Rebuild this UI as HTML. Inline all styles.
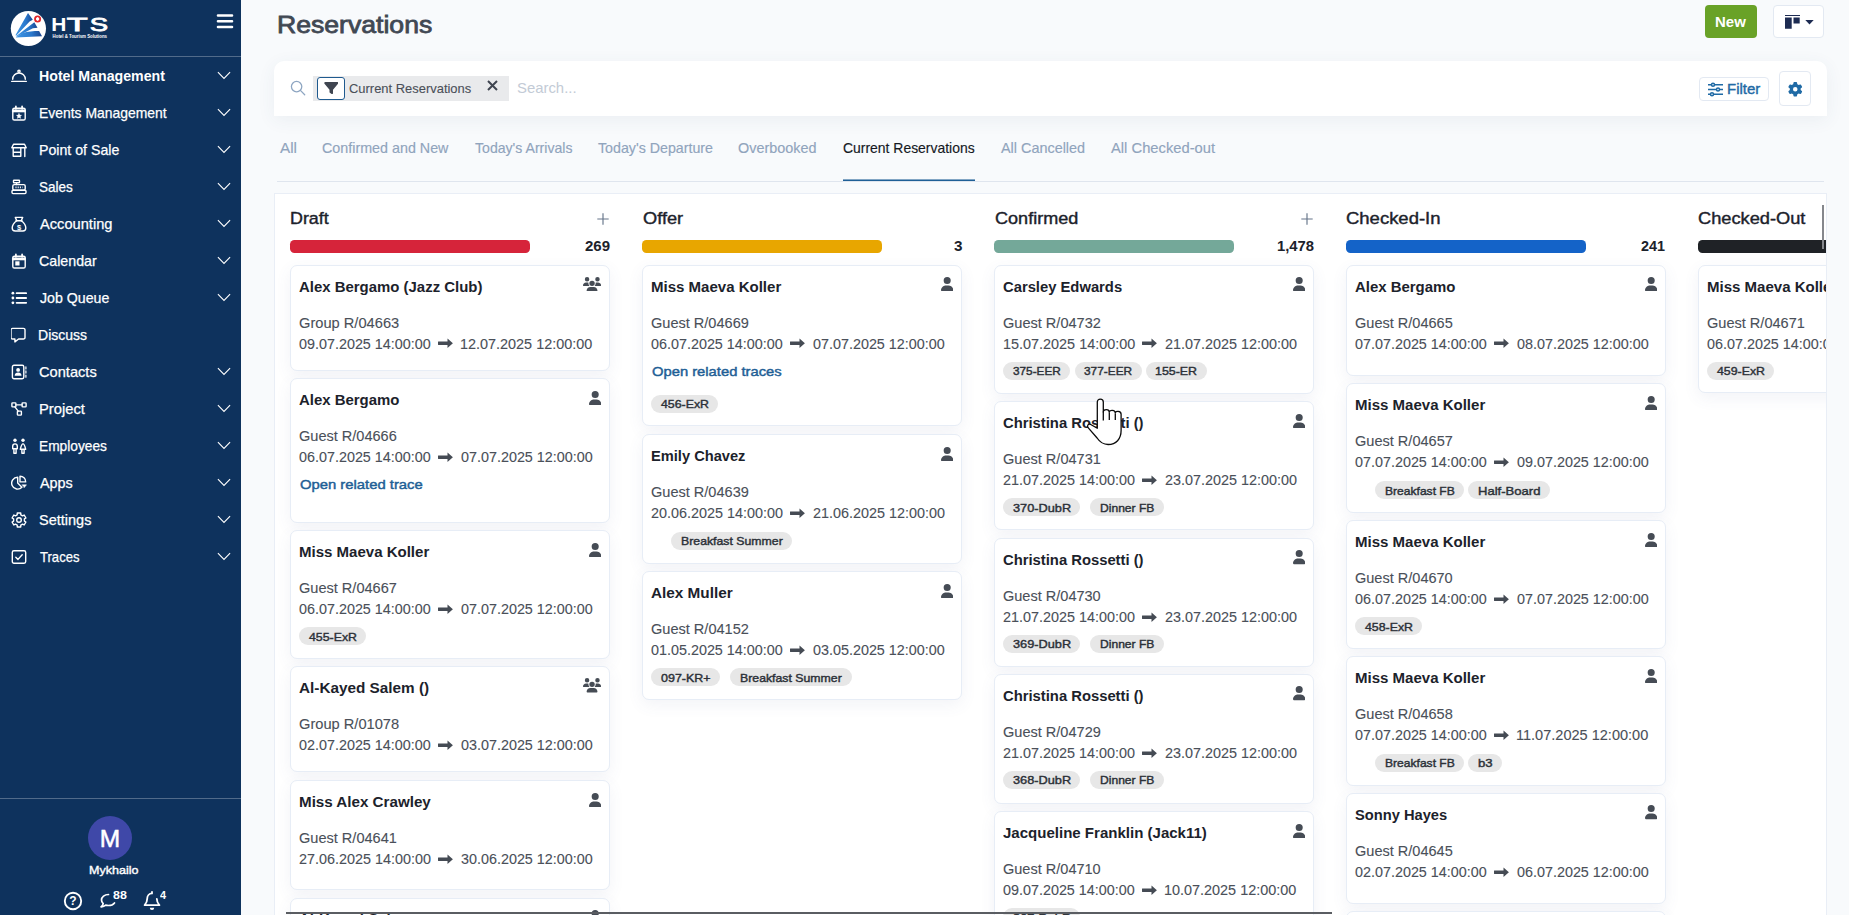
<!DOCTYPE html>
<html lang="en"><head><meta charset="utf-8"><title>Reservations</title>
<style>
*{box-sizing:border-box;margin:0;padding:0}
html,body{width:1849px;height:915px;overflow:hidden}
body{font-family:"Liberation Sans",sans-serif;background:#f8fafc;color:#1c222b;position:relative}
.abs{position:absolute;display:block}
#side{position:absolute;left:0;top:0;width:241px;height:915px;background:#0e325d;color:#fff}
#side .div1{position:absolute;left:0;top:56px;width:241px;height:1px;background:rgba(255,255,255,.28)}
#side .div2{position:absolute;left:0;top:798px;width:241px;height:1px;background:rgba(255,255,255,.28)}
#new{position:absolute;left:1705px;top:5px;width:52px;height:33px;border-radius:4px;background:#69a227}
#vs{position:absolute;left:1773px;top:5px;width:51px;height:33px;border-radius:4px;background:#fff;border:1px solid #e3e9f2}
#search{position:absolute;left:274px;top:61px;width:1553px;height:55px;background:#fff;border-radius:10px 10px 0 0;box-shadow:0 4px 18px rgba(60,80,120,.07)}
#facet{position:absolute;left:313px;top:76px;width:196px;height:25px;background:#e9eaec}
#fic{position:absolute;left:317px;top:77px;width:28px;height:23px;background:#fff;border:1px solid #1f5a8f;border-radius:3px}
#fbtn{position:absolute;left:1699px;top:77px;width:69.500px;height:24px;border:1px solid #e3e9f2;border-radius:4px;background:#fff}
#gbtn{position:absolute;left:1779px;top:71px;width:31.500px;height:34.500px;border:1px solid #e3e9f2;border-radius:4px;background:#fff}
#tabline{position:absolute;left:277px;top:181px;width:1547px;height:1px;background:#dfe5ee}
#tabact{position:absolute;left:842.500px;top:179px;width:132.500px;height:2px;background:linear-gradient(rgba(31,95,150,.55) 0,rgba(31,95,150,.55) 50%,#1f5f96 50%)}
#kan{position:absolute;left:274px;top:193px;width:1553px;height:722px;background:#fff;border:1px solid #e9eef6;border-bottom:none;overflow:hidden}
#kin{position:absolute;left:-275px;top:-194px;width:1849px;height:915px}
.bar{position:absolute;top:240px;width:240px;height:12.800px;border-radius:4.500px}
.card{position:absolute;width:320px;background:#fff;border:1px solid #e7edf6;border-radius:7px;box-shadow:0 5px 16px rgba(80,100,150,.075)}
.pill{position:absolute;height:18px;border-radius:9px;background:#e7e7e7}
#hs{position:absolute;left:286px;top:912px;width:1046px;height:2px;background:#5a5d62}
#vsb{position:absolute;left:1822px;top:205px;width:2px;height:43.500px;background:#85878c}

.mt{position:absolute;white-space:nowrap;line-height:20px;font-size:14.4px;font-weight:400;color:#fff;transform-origin:0 50%;-webkit-text-stroke:0.25px #fff;}
.mtb{position:absolute;white-space:nowrap;line-height:20px;font-size:14.6px;font-weight:700;color:#fff;transform-origin:0 50%;}
.ttl{position:absolute;white-space:nowrap;line-height:20px;font-size:24.2px;font-weight:400;color:#414853;transform-origin:0 50%;-webkit-text-stroke:0.8px #414853;}
.tab{position:absolute;white-space:nowrap;line-height:20px;font-size:14.5px;font-weight:400;color:#90a4bd;transform-origin:0 50%;-webkit-text-stroke:0.15px #90a4bd;}
.tabon{position:absolute;white-space:nowrap;line-height:20px;font-size:14.5px;font-weight:400;color:#15191f;transform-origin:0 50%;-webkit-text-stroke:0.15px #15191f;}
.kh{position:absolute;white-space:nowrap;line-height:20px;font-size:16.8px;font-weight:400;color:#1c222b;transform-origin:0 50%;-webkit-text-stroke:0.4px #1c222b;}
.cnt{position:absolute;white-space:nowrap;line-height:20px;font-size:14px;font-weight:700;color:#1c222b;transform-origin:0 50%;}
.ct{position:absolute;white-space:nowrap;line-height:20px;font-size:14px;font-weight:700;color:#1c222b;transform-origin:0 50%;}
.cr{position:absolute;white-space:nowrap;line-height:20px;font-size:13.8px;font-weight:400;color:#4a5059;transform-origin:0 50%;-webkit-text-stroke:0.1px #4a5059;}
.cd{position:absolute;white-space:nowrap;line-height:20px;font-size:13.8px;font-weight:400;color:#4a5059;transform-origin:0 50%;-webkit-text-stroke:0.1px #4a5059;}
.cl{position:absolute;white-space:nowrap;line-height:20px;font-size:13.4px;font-weight:400;color:#1f5f96;transform-origin:0 50%;-webkit-text-stroke:0.45px #1f5f96;}
.tg{position:absolute;white-space:nowrap;line-height:20px;font-size:11.6px;font-weight:400;color:#2c3138;transform-origin:0 50%;-webkit-text-stroke:0.42px #2c3138;}
.ftx{position:absolute;white-space:nowrap;line-height:20px;font-size:13.4px;font-weight:400;color:#4a4f58;transform-origin:0 50%;-webkit-text-stroke:0.1px #4a4f58;}
.sph{position:absolute;white-space:nowrap;line-height:20px;font-size:14.8px;font-weight:400;color:#c3cbd6;transform-origin:0 50%;}
.flt{position:absolute;white-space:nowrap;line-height:20px;font-size:14.4px;font-weight:400;color:#1f6aa5;transform-origin:0 50%;-webkit-text-stroke:0.4px #1f6aa5;}
.newt{position:absolute;white-space:nowrap;line-height:20px;font-size:14.4px;font-weight:700;color:#fff;transform-origin:0 50%;}
.usr{position:absolute;white-space:nowrap;line-height:20px;font-size:11.8px;font-weight:400;color:#fff;transform-origin:0 50%;-webkit-text-stroke:0.4px #fff;}
.bdg{position:absolute;white-space:nowrap;line-height:20px;font-size:10.4px;font-weight:700;color:#fff;transform-origin:0 50%;}
</style></head>
<body>
<div id="side">
<svg class="abs" style="left:0;top:0" width="120" height="56" viewBox="0 0 120 56">
<defs><linearGradient id="lg1" x1="0" y1="0" x2="1" y2="0"><stop offset="0" stop-color="#3f97e6"/><stop offset=".6" stop-color="#2a78cc"/><stop offset="1" stop-color="#1b4690"/></linearGradient></defs>
<circle cx="28.400" cy="28.500" r="17.600" fill="#fff"/>
<path d="M15.400 35.300L28 13l4.800 6.800-3.200 1.700L16.400 35.600z" fill="url(#lg1)"/>
<path d="M16 36.200l18.300-14 3.200 5.500-4.600.6L17 36.600z" fill="url(#lg1)"/>
<path d="M15.600 37.500l7-4.600c5-1.600 11-2 16.500-2l2.900 5.400z" fill="url(#lg1)"/>
<circle cx="37.600" cy="18.900" r="2.550" fill="#fff" stroke="#e3262b" stroke-width="1.900"/>
<path d="M37.600 16.900l1.700 2-1.700 2-1.700-2z" fill="#fff"/>
<text transform="translate(51.20 31.4) scale(1.090 1)" font-family="Liberation Sans,sans-serif" font-size="19.2" font-weight="700" fill="#fff">H</text><text transform="translate(66.85 31.2) scale(1.802 1)" font-family="Liberation Sans,sans-serif" font-size="19.0" fill="#fff" stroke="#fff" stroke-width="0.8">T</text><text transform="translate(89.64 31.1) scale(1.477 1)" font-family="Liberation Sans,sans-serif" font-size="18.6" fill="#fff" stroke="#fff" stroke-width="0.8">S</text>
<text x="52.600" y="37.500" font-family="Liberation Sans,sans-serif" font-weight="700" font-size="4.500" fill="#fff" textLength="54.400" lengthAdjust="spacingAndGlyphs">Hotel &amp; Tourism Solutions</text>
</svg>
<svg class="abs" style="left:216px;top:12px" width="18" height="18" viewBox="0 0 18 18"><path d="M2 3.500h14M2 9.300h14M2 15h14" stroke="#fff" stroke-width="2.600" stroke-linecap="round"/></svg>
<div class="div1"></div><div class="div2"></div>
<span class="abs" style="left:11px;top:68px;width:16px;height:16px"><svg viewBox="0 0 16 16" width="16" height="16" fill="none" stroke="#fff" stroke-width="1.400" stroke-linecap="round" stroke-linejoin="round"  style="display:block"><path d="M1.700 11.300a6.300 6.300 0 0 1 12.600 0"/><path d="M.7 13.400h14.600"/><circle cx="8" cy="3.200" r="1.100"/></svg></span>
<span class="mtb" style="left:38.95px;top:66.00px;transform:scaleX(0.9705);">Hotel Management</span>
<svg class="abs" style="left:217.10px;top:71.40px" width="14" height="9" viewBox="0 0 14 9" ><path d="M.9 1.100l6.100 6.300 6.100-6.300" fill="none" stroke="#fff" stroke-width="1.080"/></svg>
<span class="abs" style="left:11px;top:105px;width:16px;height:16px"><svg viewBox="0 0 16 16" width="16" height="16" fill="none" stroke="#fff" stroke-width="1.400" stroke-linecap="round" stroke-linejoin="round" stroke-width="1.500" style="display:block"><rect x="1.800" y="3.200" width="12.400" height="11.800" rx="1.600"/><path d="M1.800 4.800h12.400v2.200H1.800z" fill="#fff" stroke-width=".6"/><path d="M4.900 1.300v2.500M11.100 1.300v2.500" stroke-width="1.700"/><path d="M8 8.300l.85 1.700 1.850.25-1.350 1.300.35 1.850L8 12.500l-1.700.9.350-1.850-1.350-1.300 1.850-.25z" fill="#fff" stroke-width=".3"/></svg></span>
<span class="mt" style="left:38.88px;top:103.00px;transform:scaleX(0.9674);">Events Management</span>
<svg class="abs" style="left:217.10px;top:108.40px" width="14" height="9" viewBox="0 0 14 9" ><path d="M.9 1.100l6.100 6.300 6.100-6.300" fill="none" stroke="#fff" stroke-width="1.080"/></svg>
<span class="abs" style="left:11px;top:142px;width:16px;height:16px"><svg viewBox="0 0 16 16" width="16" height="16" fill="none" stroke="#fff" stroke-width="1.400" stroke-linecap="round" stroke-linejoin="round"  style="display:block"><path d="M2.500 2.200h11l1.700 3.600H.8z"/><path d="M2.200 6v8.300h7.600V6M2.200 10.200h7.600M13.800 6v8.600"/></svg></span>
<span class="mt" style="left:38.86px;top:140.00px;transform:scaleX(0.9845);">Point of Sale</span>
<svg class="abs" style="left:217.10px;top:145.40px" width="14" height="9" viewBox="0 0 14 9" ><path d="M.9 1.100l6.100 6.300 6.100-6.300" fill="none" stroke="#fff" stroke-width="1.080"/></svg>
<span class="abs" style="left:11px;top:179px;width:16px;height:16px"><svg viewBox="0 0 16 16" width="16" height="16" fill="none" stroke="#fff" stroke-width="1.400" stroke-linecap="round" stroke-linejoin="round"  style="display:block"><rect x="2.500" y="1.200" width="6" height="2.600" rx=".5"/><path d="M5.500 3.800v1.800"/><rect x="1.800" y="5.600" width="12.400" height="5.600" rx="1.500"/><rect x="1" y="11.200" width="14" height="3.400" rx="1"/><path d="M4.500 8.400h7" stroke-dasharray="1 1.200" stroke-linecap="butt" stroke-width="1.600"/></svg></span>
<span class="mt" style="left:39.40px;top:177.00px;transform:scaleX(0.9380);">Sales</span>
<svg class="abs" style="left:217.10px;top:182.40px" width="14" height="9" viewBox="0 0 14 9" ><path d="M.9 1.100l6.100 6.300 6.100-6.300" fill="none" stroke="#fff" stroke-width="1.080"/></svg>
<span class="abs" style="left:11px;top:216px;width:16px;height:16px"><svg viewBox="0 0 16 16" width="16" height="16" fill="none" stroke="#fff" stroke-width="1.400" stroke-linecap="round" stroke-linejoin="round"  style="display:block"><path d="M5.800 4.600L4.300 1.400h7.400L10.200 4.600"/><path d="M5 4.700h6"/><path d="M5.700 4.800C3 6.800 1.200 9.500 1.200 12c0 1.800 1.200 3 3 3h7.600c1.800 0 3-1.200 3-3 0-2.500-1.800-5.200-4.500-7.200"/><text x="8" y="13.500" font-family="Liberation Sans,sans-serif" font-size="7.600" font-weight="700" fill="#fff" stroke="none" text-anchor="middle">$</text></svg></span>
<span class="mt" style="left:40.00px;top:214.00px;transform:scaleX(1.0171);">Accounting</span>
<svg class="abs" style="left:217.10px;top:219.40px" width="14" height="9" viewBox="0 0 14 9" ><path d="M.9 1.100l6.100 6.300 6.100-6.300" fill="none" stroke="#fff" stroke-width="1.080"/></svg>
<span class="abs" style="left:11px;top:253px;width:16px;height:16px"><svg viewBox="0 0 16 16" width="16" height="16" fill="none" stroke="#fff" stroke-width="1.400" stroke-linecap="round" stroke-linejoin="round" stroke-width="1.500" style="display:block"><rect x="1.800" y="3.200" width="12.400" height="11.800" rx="1.600"/><path d="M1.800 4.800h12.400v2.200H1.800z" fill="#fff" stroke-width=".6"/><path d="M4.900 1.300v2.500M11.100 1.300v2.500" stroke-width="1.700"/><rect x="4.300" y="8.300" width="4.200" height="4.200" fill="#fff" stroke="none"/></svg></span>
<span class="mt" style="left:39.30px;top:251.00px;transform:scaleX(0.9881);">Calendar</span>
<svg class="abs" style="left:217.10px;top:256.40px" width="14" height="9" viewBox="0 0 14 9" ><path d="M.9 1.100l6.100 6.300 6.100-6.300" fill="none" stroke="#fff" stroke-width="1.080"/></svg>
<span class="abs" style="left:11px;top:290px;width:16px;height:16px"><svg viewBox="0 0 16 16" width="16" height="16" fill="none" stroke="#fff" stroke-width="1.400" stroke-linecap="round" stroke-linejoin="round"  style="display:block"><path d="M5.600 3.200h9.600M5.600 8h9.600M5.600 12.800h9.600" stroke-width="1.800"/><circle cx="1.900" cy="3.200" r="1.400" fill="#fff" stroke="none"/><circle cx="1.900" cy="8" r="1.400" fill="#fff" stroke="none"/><circle cx="1.900" cy="12.800" r="1.400" fill="#fff" stroke="none"/></svg></span>
<span class="mt" style="left:39.80px;top:288.00px;transform:scaleX(0.9856);">Job Queue</span>
<svg class="abs" style="left:217.10px;top:293.40px" width="14" height="9" viewBox="0 0 14 9" ><path d="M.9 1.100l6.100 6.300 6.100-6.300" fill="none" stroke="#fff" stroke-width="1.080"/></svg>
<span class="abs" style="left:11px;top:327px;width:16px;height:16px"><svg viewBox="0 0 16 16" width="16" height="16" fill="none" stroke="#fff" stroke-width="1.400" stroke-linecap="round" stroke-linejoin="round" stroke-width="1.600" style="display:block"><path d="M1.600 1.400h10.800a1.600 1.600 0 0 1 1.600 1.600v7.400a1.600 1.600 0 0 1-1.600 1.600H7.600L3.900 14.900V12H1.600A1.600 1.600 0 0 1 0 10.400V3a1.600 1.600 0 0 1 1.600-1.600z"/></svg></span>
<span class="mt" style="left:37.97px;top:325.00px;transform:scaleX(0.9750);">Discuss</span>
<span class="abs" style="left:11px;top:364px;width:16px;height:16px"><svg viewBox="0 0 16 16" width="16" height="16" fill="none" stroke="#fff" stroke-width="1.400" stroke-linecap="round" stroke-linejoin="round" stroke-width="1.500" style="display:block"><rect x="1.400" y="1.300" width="11.400" height="13.400" rx="1.600"/><circle cx="7.100" cy="5.900" r="1.900" fill="#fff" stroke="none"/><path d="M3.700 11.800c0-2.100 1.500-3.200 3.400-3.200s3.400 1.100 3.400 3.200z" fill="#fff" stroke="none"/><path d="M14.900 2.800v2.200M14.900 6.900v2.200M14.900 11v2.200" stroke-width="1.200"/></svg></span>
<span class="mt" style="left:39.28px;top:362.00px;transform:scaleX(1.0162);">Contacts</span>
<svg class="abs" style="left:217.10px;top:367.40px" width="14" height="9" viewBox="0 0 14 9" ><path d="M.9 1.100l6.100 6.300 6.100-6.300" fill="none" stroke="#fff" stroke-width="1.080"/></svg>
<span class="abs" style="left:11px;top:401px;width:16px;height:16px"><svg viewBox="0 0 16 16" width="16" height="16" fill="none" stroke="#fff" stroke-width="1.400" stroke-linecap="round" stroke-linejoin="round" stroke-width="1.500" style="display:block"><rect x=".9" y="1.900" width="4" height="4" rx=".7"/><rect x="11.100" y="1.900" width="4" height="4" rx=".7"/><rect x="6.400" y="10.100" width="4" height="4" rx=".7"/><path d="M4.900 3.900h6.200M3.900 5.900l3.300 4.200"/></svg></span>
<span class="mt" style="left:38.82px;top:399.00px;transform:scaleX(1.0238);">Project</span>
<svg class="abs" style="left:217.10px;top:404.40px" width="14" height="9" viewBox="0 0 14 9" ><path d="M.9 1.100l6.100 6.300 6.100-6.300" fill="none" stroke="#fff" stroke-width="1.080"/></svg>
<span class="abs" style="left:11px;top:438px;width:16px;height:16px"><svg viewBox="0 0 16 16" width="16" height="16" fill="none" stroke="#fff" stroke-width="1.400" stroke-linecap="round" stroke-linejoin="round" stroke-width="1.300" style="display:block"><circle cx="4" cy="2.300" r="1.700" fill="#fff" stroke="none"/><circle cx="12" cy="2.300" r="1.700" fill="#fff" stroke="none"/><path d="M1.700 10.700V8.200a2.300 2.300 0 0 1 4.600 0v2.500zM2.900 10.700v4.500h2.200v-4.500"/><path d="M12 5.900c-1.300 0-1.800 1.600-2.700 5.400h5.400c-.9-3.800-1.400-5.400-2.700-5.400zM10.900 11.300v3.900h2.200v-3.900"/></svg></span>
<span class="mt" style="left:38.89px;top:436.00px;transform:scaleX(0.9550);">Employees</span>
<svg class="abs" style="left:217.10px;top:441.40px" width="14" height="9" viewBox="0 0 14 9" ><path d="M.9 1.100l6.100 6.300 6.100-6.300" fill="none" stroke="#fff" stroke-width="1.080"/></svg>
<span class="abs" style="left:11px;top:475px;width:16px;height:16px"><svg viewBox="0 0 16 16" width="16" height="16" fill="none" stroke="#fff" stroke-width="1.400" stroke-linecap="round" stroke-linejoin="round" stroke-width="1.500" style="display:block"><path d="M6.700 2.200v5.900l4.200 4.200a5.950 5.950 0 1 1-4.200-10.100z"/><path d="M9 1.200a5.700 5.700 0 0 1 5.700 5.700H9z"/><path d="M11.200 9.800h4.300l-2.150 2.700z" fill="#fff" stroke-width=".5"/></svg></span>
<span class="mt" style="left:40.00px;top:473.00px;">Apps</span>
<svg class="abs" style="left:217.10px;top:478.40px" width="14" height="9" viewBox="0 0 14 9" ><path d="M.9 1.100l6.100 6.300 6.100-6.300" fill="none" stroke="#fff" stroke-width="1.080"/></svg>
<span class="abs" style="left:11px;top:512px;width:16px;height:16px"><svg viewBox="0 0 16 16" width="16" height="16" fill="none" stroke="#fff" stroke-width="1.400" stroke-linecap="round" stroke-linejoin="round" stroke-width="1.500" style="display:block"><circle cx="8" cy="8" r="2.300"/><path d="M6.26 1.01L9.74 1.01L9.79 2.80L11.61 3.85L13.18 3.00L14.92 6.02L13.40 6.95L13.40 9.05L14.92 9.98L13.18 13.00L11.61 12.15L9.79 13.20L9.74 14.99L6.26 14.99L6.21 13.20L4.39 12.15L2.82 13.00L1.08 9.98L2.60 9.05L2.60 6.95L1.08 6.02L2.82 3.00L4.39 3.85L6.21 2.80z"/></svg></span>
<span class="mt" style="left:39.37px;top:510.00px;transform:scaleX(1.0083);">Settings</span>
<svg class="abs" style="left:217.10px;top:515.40px" width="14" height="9" viewBox="0 0 14 9" ><path d="M.9 1.100l6.100 6.300 6.100-6.300" fill="none" stroke="#fff" stroke-width="1.080"/></svg>
<span class="abs" style="left:11px;top:549px;width:16px;height:16px"><svg viewBox="0 0 16 16" width="16" height="16" fill="none" stroke="#fff" stroke-width="1.400" stroke-linecap="round" stroke-linejoin="round"  style="display:block"><rect x="1.300" y="1.800" width="13.400" height="12.400" rx="1.600"/><path d="M4.800 8.200l2.200 2.200 4.200-4.600"/></svg></span>
<span class="mt" style="left:39.72px;top:547.00px;transform:scaleX(0.9100);">Traces</span>
<svg class="abs" style="left:217.10px;top:552.40px" width="14" height="9" viewBox="0 0 14 9" ><path d="M.9 1.100l6.100 6.300 6.100-6.300" fill="none" stroke="#fff" stroke-width="1.080"/></svg>
<div class="abs" style="left:88px;top:816px;width:44px;height:44px;border-radius:50%;background:#3f48a8;color:#fff;font-size:24.500px;line-height:45.500px;text-align:center;-webkit-text-stroke:.5px #fff">M</div>
<svg class="abs" style="left:62.500px;top:891px" width="20" height="20" viewBox="0 0 20 20"><circle cx="10" cy="10" r="8.200" fill="none" stroke="#fff" stroke-width="1.900"/><text x="10" y="14.300" font-family="Liberation Sans,sans-serif" font-weight="700" font-size="12" fill="#fff" text-anchor="middle">?</text></svg>
<svg class="abs" style="left:99px;top:893px" width="18" height="16" viewBox="0 0 18 16"><path d="M9.500 1.500c-4 0-7 2.400-7 5.500 0 1.400.6 2.600 1.700 3.600-.3 1.300-1.200 2.400-2.200 3.200 1.900.1 3.600-.6 4.700-1.600.9.200 1.800.3 2.800.3 2.600 0 4.800-1 6-2.600" fill="none" stroke="#fff" stroke-width="1.700" stroke-linecap="round" stroke-linejoin="round"/></svg>
<svg class="abs" style="left:143px;top:890px" width="18" height="21" viewBox="0 0 18 21"><path d="M9 1.800v1.600M9 3.400c-3 0-4.800 2.400-4.800 5.400 0 3.600-1.500 5.200-2.600 6.400h14.800c-1.100-1.200-2.600-2.800-2.600-6.400" fill="none" stroke="#fff" stroke-width="1.800" stroke-linecap="round" stroke-linejoin="round"/><path d="M6.800 17.800a2.200 2.200 0 0 0 4.400 0z" fill="#fff"/></svg>
<span class="usr" style="left:89.08px;top:860.00px;transform:scaleX(1.0616);">Mykhailo</span>
<span class="bdg" style="left:112.51px;top:886.00px;transform:scaleX(1.1913);">88</span>
<span class="bdg" style="left:160.04px;top:886.00px;transform:scaleX(1.0417);">4</span>
</div>
<span class="ttl" style="left:277.46px;top:15.00px;transform:scaleX(1.0998);">Reservations</span>
<div id="new"></div>
<span class="newt" style="left:1715.00px;top:12.00px;transform:scaleX(1.0398);">New</span>
<div id="vs">
<svg class="abs" style="left:11px;top:9px" width="16" height="15" viewBox="0 0 16 15"><path d="M0 0h15v1H0z" fill="#1d2b52"/><path d="M0 2.500h6.700v11.300H0zM8.500 2.500h6.200v6H8.500z" fill="#1d2b52"/></svg>
<svg class="abs" style="left:31px;top:13.500px" width="9" height="5" viewBox="0 0 9 5"><path d="M.3 0h8.400L4.500 4.600z" fill="#1d2b52"/></svg>
</div>
<div id="search"></div>
<svg class="abs" style="left:290px;top:80px" width="16" height="16" viewBox="0 0 16 16"><circle cx="6.600" cy="6.600" r="5.200" fill="none" stroke="#8ea6c2" stroke-width="1.300"/><path d="M10.400 10.400l4.300 4.300" stroke="#8ea6c2" stroke-width="1.300" stroke-linecap="round"/></svg>
<div id="facet"></div>
<div id="fic"><svg class="abs" style="left:5.500px;top:3.200px" width="14.500" height="14" viewBox="0 0 512 512"><path d="M3.900 54.900C10.500 40.900 24.500 32 40 32H472c15.500 0 29.500 8.900 36.100 22.900s4.600 30.500-5.200 42.500L320 320.900V448c0 12.100-6.800 23.200-17.700 28.600s-23.800 4.300-33.500-3l-64-48c-8.100-6-12.800-15.500-12.800-25.600V320.900L9 97.300C-.7 85.400-2.800 68.800 3.900 54.900z" fill="#3f4550"/></svg></div>
<svg class="abs" style="left:487px;top:80px" width="11" height="11" viewBox="0 0 11 11"><path d="M1 1l9 9M10 1l-9 9" stroke="#3f4550" stroke-width="2"/></svg>
<div id="fbtn"><svg class="abs" style="left:7.500px;top:3.500px" width="15" height="15" viewBox="0 0 15 15"><g stroke="#1f6aa5" stroke-width="1.500" fill="#fff"><path d="M0 2.800h15M0 7.500h15M0 12.200h15"/><circle cx="5" cy="2.800" r="1.500"/><circle cx="10" cy="7.500" r="1.500"/><circle cx="4" cy="12.200" r="1.500"/></g></svg></div>
<div id="gbtn"><svg class="abs" style="left:8px;top:10px" width="14.500" height="14.500" viewBox="0 0 512 512"><path d="M495.900 166.600c3.200 8.700 .5 18.400-6.400 24.600l-43.300 39.400c1.100 8.300 1.700 16.800 1.700 25.400s-.6 17.100-1.700 25.400l43.300 39.400c6.900 6.200 9.600 15.900 6.400 24.600c-4.400 11.900-9.700 23.300-15.800 34.300l-4.700 8.100c-6.600 11-14 21.400-22.100 31.200c-5.900 7.200-15.700 9.600-24.500 6.800l-55.700-17.700c-13.400 10.300-28.200 18.900-44 25.400l-12.500 57.100c-2 9.100-9 16.300-18.200 17.800c-13.800 2.300-28 3.500-42.500 3.500s-28.700-1.200-42.500-3.500c-9.200-1.500-16.200-8.700-18.200-17.800l-12.500-57.100c-15.800-6.500-30.600-15.100-44-25.400L83.100 425.900c-8.800 2.800-18.600 .3-24.500-6.800c-8.100-9.800-15.500-20.200-22.100-31.200l-4.700-8.100c-6.100-11-11.400-22.400-15.800-34.300c-3.200-8.700-.5-18.400 6.400-24.600l43.300-39.400C64.600 273.100 64 264.600 64 256s.6-17.100 1.700-25.400L22.400 191.200c-6.900-6.200-9.600-15.900-6.400-24.600c4.400-11.900 9.700-23.300 15.800-34.300l4.700-8.100c6.600-11 14-21.400 22.100-31.200c5.900-7.200 15.700-9.600 24.500-6.800l55.700 17.700c13.400-10.300 28.200-18.900 44-25.400l12.500-57.100c2-9.100 9-16.300 18.200-17.800C227.300 1.200 241.500 0 256 0s28.700 1.200 42.500 3.500c9.200 1.500 16.200 8.700 18.200 17.800l12.500 57.100c15.800 6.500 30.600 15.100 44 25.400l55.700-17.700c8.800-2.800 18.600-.3 24.500 6.800c8.100 9.800 15.500 20.200 22.100 31.200l4.700 8.100c6.100 11 11.400 22.400 15.800 34.300zM256 336a80 80 0 1 0 0-160 80 80 0 1 0 0 160z" fill="#1f6aa5"/></svg></div>
<span class="ftx" style="left:349.19px;top:79.00px;transform:scaleX(0.9660);">Current Reservations</span>
<span class="sph" style="left:517.32px;top:78.00px;transform:scaleX(1.0053);">Search...</span>
<span class="flt" style="left:1727.18px;top:79.00px;transform:scaleX(1.0399);">Filter</span>
<span class="tab" style="left:280.25px;top:138.00px;transform:scaleX(1.0539);">All</span>
<span class="tab" style="left:322.35px;top:138.00px;transform:scaleX(0.9866);">Confirmed and New</span>
<span class="tab" style="left:475.16px;top:138.00px;transform:scaleX(0.9721);">Today&#x27;s Arrivals</span>
<span class="tab" style="left:597.95px;top:138.00px;transform:scaleX(0.9811);">Today&#x27;s Departure</span>
<span class="tab" style="left:738.49px;top:138.00px;transform:scaleX(0.9932);">Overbooked</span>
<span class="tabon" style="left:842.56px;top:138.00px;transform:scaleX(0.9611);">Current Reservations</span>
<span class="tab" style="left:1000.55px;top:138.00px;transform:scaleX(0.9937);">All Cancelled</span>
<span class="tab" style="left:1110.95px;top:138.00px;transform:scaleX(1.0169);">All Checked-out</span>
<div id="tabline"></div><div id="tabact"></div>
<div id="kan"><div id="kin">
<span class="kh" style="left:289.94px;top:209.00px;transform:scaleX(1.0659);">Draft</span>
<svg class="abs" style="left:597.00px;top:212.90px" width="12" height="12" viewBox="0 0 12 12" ><path d="M6 .3v11.400M.3 6h11.400" stroke="#66758a" stroke-width="1.150" fill="none"/></svg>
<div class="bar" style="left:290px;background:#d6243a"></div>
<span class="cnt" style="left:585.18px;top:236.00px;transform:scaleX(1.0736);">269</span>
<div class="card" style="left:290px;top:264.7px;height:106.3px"></div>
<span class="ct" style="left:299.23px;top:277.00px;transform:scaleX(1.0668);">Alex Bergamo (Jazz Club)</span>
<svg class="abs" style="left:583.20px;top:276.90px" width="18.1" height="14.5" viewBox="0 0 640 512" ><path d="M144 0a80 80 0 1 1 0 160A80 80 0 1 1 144 0zM512 0a80 80 0 1 1 0 160A80 80 0 1 1 512 0zM0 298.700C0 239.800 47.800 192 106.700 192h42.700c15.900 0 31 3.500 44.600 9.700c-1.300 7.200-1.900 14.700-1.900 22.300c0 38.200 16.800 72.500 43.300 96c-.2 0-.4 0-.7 0H21.300C9.600 320 0 310.400 0 298.700zM405.300 320c-.2 0-.4 0-.7 0c26.600-23.500 43.300-57.800 43.300-96c0-7.600-.7-15-1.900-22.300c13.600-6.300 28.700-9.700 44.600-9.700h42.700C592.200 192 640 239.800 640 298.700c0 11.800-9.600 21.300-21.300 21.300H405.300zM224 224a96 96 0 1 1 192 0 96 96 0 1 1 -192 0zM128 485.300C128 411.700 187.700 352 261.300 352H378.700C452.300 352 512 411.700 512 485.300c0 14.700-11.900 26.700-26.700 26.700H154.700c-14.700 0-26.700-11.900-26.700-26.700z" fill="#464c55"/></svg>
<span class="cr" style="left:299.12px;top:314.00px;transform:scaleX(1.0618);">Group R/04663</span>
<span class="cd" style="left:299.09px;top:335.00px;transform:scaleX(1.0405);">09.07.2025 14:00:00</span>
<svg class="abs" style="left:438.10px;top:338.40px" width="15" height="10.4" viewBox="0 0 15 10.4" ><path d="M.3 3.500h9.200V.5l5.400 4.700-5.400 4.700V6.900H.3a.3.3 0 0 1-.3-.3V3.800a.3.3 0 0 1 .3-.3z" fill="#454b54"/></svg>
<span class="cd" style="left:460.25px;top:335.00px;transform:scaleX(1.0447);">12.07.2025 12:00:00</span>
<div class="card" style="left:290px;top:378.2px;height:144.6px"></div>
<span class="ct" style="left:299.23px;top:390.00px;transform:scaleX(1.0669);">Alex Bergamo</span>
<svg class="abs" style="left:588.80px;top:390.60px" width="12.4" height="14.2" viewBox="0 0 448 512" ><path d="M224 256A128 128 0 1 0 224 0a128 128 0 1 0 0 256zm-45.700 48C79.800 304 0 383.800 0 482.300C0 498.700 13.300 512 29.700 512H418.300c16.400 0 29.700-13.300 29.700-29.700C448 383.800 368.200 304 269.700 304H178.300z" fill="#464c55"/></svg>
<span class="cr" style="left:299.12px;top:427.00px;transform:scaleX(1.0534);">Guest R/04666</span>
<span class="cd" style="left:299.09px;top:448.00px;transform:scaleX(1.0405);">06.07.2025 14:00:00</span>
<svg class="abs" style="left:438.10px;top:451.90px" width="15" height="10.4" viewBox="0 0 15 10.4" ><path d="M.3 3.500h9.200V.5l5.400 4.700-5.400 4.700V6.900H.3a.3.3 0 0 1-.3-.3V3.800a.3.3 0 0 1 .3-.3z" fill="#454b54"/></svg>
<span class="cd" style="left:460.79px;top:448.00px;transform:scaleX(1.0405);">07.07.2025 12:00:00</span>
<span class="cl" style="left:300.15px;top:475.00px;transform:scaleX(1.1068);">Open related trace</span>
<div class="card" style="left:290px;top:530.3px;height:128.5px"></div>
<span class="ct" style="left:298.60px;top:542.00px;transform:scaleX(1.0728);">Miss Maeva Koller</span>
<svg class="abs" style="left:588.80px;top:542.70px" width="12.4" height="14.2" viewBox="0 0 448 512" ><path d="M224 256A128 128 0 1 0 224 0a128 128 0 1 0 0 256zm-45.700 48C79.800 304 0 383.800 0 482.300C0 498.700 13.300 512 29.700 512H418.300c16.400 0 29.700-13.300 29.700-29.700C448 383.800 368.200 304 269.700 304H178.300z" fill="#464c55"/></svg>
<span class="cr" style="left:299.12px;top:579.00px;transform:scaleX(1.0544);">Guest R/04667</span>
<span class="cd" style="left:299.09px;top:600.00px;transform:scaleX(1.0405);">06.07.2025 14:00:00</span>
<svg class="abs" style="left:438.10px;top:604.00px" width="15" height="10.4" viewBox="0 0 15 10.4" ><path d="M.3 3.500h9.200V.5l5.400 4.700-5.400 4.700V6.900H.3a.3.3 0 0 1-.3-.3V3.800a.3.3 0 0 1 .3-.3z" fill="#454b54"/></svg>
<span class="cd" style="left:460.79px;top:600.00px;transform:scaleX(1.0405);">07.07.2025 12:00:00</span>
<div class="pill" style="left:299.10px;top:627.30px;width:66.80px"></div><span class="tg" style="left:309.04px;top:627.00px;transform:scaleX(1.0643);">455-ExR</span>
<div class="card" style="left:290px;top:665.9px;height:106.6px"></div>
<span class="ct" style="left:299.22px;top:678.00px;transform:scaleX(1.0932);">Al-Kayed Salem ()</span>
<svg class="abs" style="left:583.20px;top:678.10px" width="18.1" height="14.5" viewBox="0 0 640 512" ><path d="M144 0a80 80 0 1 1 0 160A80 80 0 1 1 144 0zM512 0a80 80 0 1 1 0 160A80 80 0 1 1 512 0zM0 298.700C0 239.800 47.800 192 106.700 192h42.700c15.900 0 31 3.500 44.600 9.700c-1.300 7.200-1.900 14.700-1.900 22.300c0 38.200 16.800 72.500 43.300 96c-.2 0-.4 0-.7 0H21.300C9.600 320 0 310.400 0 298.700zM405.300 320c-.2 0-.4 0-.7 0c26.600-23.500 43.300-57.800 43.300-96c0-7.600-.7-15-1.900-22.300c13.600-6.300 28.700-9.700 44.600-9.700h42.700C592.200 192 640 239.800 640 298.700c0 11.800-9.600 21.300-21.300 21.300H405.300zM224 224a96 96 0 1 1 192 0 96 96 0 1 1 -192 0zM128 485.300C128 411.700 187.700 352 261.300 352H378.700C452.300 352 512 411.700 512 485.300c0 14.700-11.900 26.700-26.700 26.700H154.700c-14.700 0-26.700-11.900-26.700-26.700z" fill="#464c55"/></svg>
<span class="cr" style="left:299.12px;top:715.00px;transform:scaleX(1.0617);">Group R/01078</span>
<span class="cd" style="left:299.09px;top:736.00px;transform:scaleX(1.0405);">02.07.2025 14:00:00</span>
<svg class="abs" style="left:438.10px;top:739.60px" width="15" height="10.4" viewBox="0 0 15 10.4" ><path d="M.3 3.500h9.200V.5l5.400 4.700-5.400 4.700V6.900H.3a.3.3 0 0 1-.3-.3V3.800a.3.3 0 0 1 .3-.3z" fill="#454b54"/></svg>
<span class="cd" style="left:460.79px;top:736.00px;transform:scaleX(1.0405);">03.07.2025 12:00:00</span>
<div class="card" style="left:290px;top:780.1px;height:109.5px"></div>
<span class="ct" style="left:298.59px;top:792.00px;transform:scaleX(1.0833);">Miss Alex Crawley</span>
<svg class="abs" style="left:588.80px;top:792.50px" width="12.4" height="14.2" viewBox="0 0 448 512" ><path d="M224 256A128 128 0 1 0 224 0a128 128 0 1 0 0 256zm-45.700 48C79.800 304 0 383.800 0 482.300C0 498.700 13.300 512 29.700 512H418.300c16.400 0 29.700-13.300 29.700-29.700C448 383.800 368.200 304 269.700 304H178.300z" fill="#464c55"/></svg>
<span class="cr" style="left:299.12px;top:829.00px;transform:scaleX(1.0541);">Guest R/04641</span>
<span class="cd" style="left:298.93px;top:850.00px;transform:scaleX(1.0418);">27.06.2025 14:00:00</span>
<svg class="abs" style="left:438.10px;top:853.80px" width="15" height="10.4" viewBox="0 0 15 10.4" ><path d="M.3 3.500h9.200V.5l5.400 4.700-5.400 4.700V6.900H.3a.3.3 0 0 1-.3-.3V3.800a.3.3 0 0 1 .3-.3z" fill="#454b54"/></svg>
<span class="cd" style="left:460.81px;top:850.00px;transform:scaleX(1.0404);">30.06.2025 12:00:00</span>
<div class="card" style="left:290px;top:897.5px;height:111.0px"></div>
<span class="ct" style="left:299.23px;top:909.00px;transform:scaleX(1.0706);">Al-Kayed Salem</span>
<svg class="abs" style="left:588.80px;top:909.90px" width="12.4" height="14.2" viewBox="0 0 448 512" ><path d="M224 256A128 128 0 1 0 224 0a128 128 0 1 0 0 256zm-45.700 48C79.800 304 0 383.800 0 482.300C0 498.700 13.300 512 29.700 512H418.300c16.400 0 29.700-13.300 29.700-29.700C448 383.800 368.200 304 269.700 304H178.300z" fill="#464c55"/></svg>
<span class="cr" style="left:299.12px;top:946.00px;transform:scaleX(1.0526);">Guest R/04640</span>
<span class="cd" style="left:298.93px;top:967.00px;transform:scaleX(1.0418);">27.06.2025 14:00:00</span>
<svg class="abs" style="left:438.10px;top:971.20px" width="15" height="10.4" viewBox="0 0 15 10.4" ><path d="M.3 3.500h9.200V.5l5.400 4.700-5.400 4.700V6.900H.3a.3.3 0 0 1-.3-.3V3.800a.3.3 0 0 1 .3-.3z" fill="#454b54"/></svg>
<span class="cd" style="left:460.81px;top:967.00px;transform:scaleX(1.0404);">30.06.2025 12:00:00</span>
<span class="kh" style="left:642.55px;top:209.00px;transform:scaleX(1.0846);">Offer</span>
<div class="bar" style="left:642px;background:#e8a600"></div>
<span class="cnt" style="left:953.85px;top:236.00px;transform:scaleX(1.0904);">3</span>
<div class="card" style="left:642px;top:264.7px;height:161.7px"></div>
<span class="ct" style="left:650.60px;top:277.00px;transform:scaleX(1.0728);">Miss Maeva Koller</span>
<svg class="abs" style="left:940.80px;top:277.10px" width="12.4" height="14.2" viewBox="0 0 448 512" ><path d="M224 256A128 128 0 1 0 224 0a128 128 0 1 0 0 256zm-45.700 48C79.800 304 0 383.800 0 482.300C0 498.700 13.300 512 29.700 512H418.300c16.400 0 29.700-13.300 29.700-29.700C448 383.800 368.200 304 269.700 304H178.300z" fill="#464c55"/></svg>
<span class="cr" style="left:651.12px;top:314.00px;transform:scaleX(1.0539);">Guest R/04669</span>
<span class="cd" style="left:651.09px;top:335.00px;transform:scaleX(1.0405);">06.07.2025 14:00:00</span>
<svg class="abs" style="left:790.10px;top:338.40px" width="15" height="10.4" viewBox="0 0 15 10.4" ><path d="M.3 3.500h9.200V.5l5.400 4.700-5.400 4.700V6.900H.3a.3.3 0 0 1-.3-.3V3.800a.3.3 0 0 1 .3-.3z" fill="#454b54"/></svg>
<span class="cd" style="left:812.79px;top:335.00px;transform:scaleX(1.0405);">07.07.2025 12:00:00</span>
<span class="cl" style="left:652.15px;top:362.00px;transform:scaleX(1.1023);">Open related traces</span>
<div class="pill" style="left:651.10px;top:395.00px;width:66.80px"></div><span class="tg" style="left:661.04px;top:394.00px;transform:scaleX(1.0643);">456-ExR</span>
<div class="card" style="left:642px;top:434.1px;height:129.6px"></div>
<span class="ct" style="left:650.62px;top:446.00px;transform:scaleX(1.0459);">Emily Chavez</span>
<svg class="abs" style="left:940.80px;top:446.50px" width="12.4" height="14.2" viewBox="0 0 448 512" ><path d="M224 256A128 128 0 1 0 224 0a128 128 0 1 0 0 256zm-45.700 48C79.800 304 0 383.800 0 482.300C0 498.700 13.300 512 29.700 512H418.300c16.400 0 29.700-13.300 29.700-29.700C448 383.800 368.200 304 269.700 304H178.300z" fill="#464c55"/></svg>
<span class="cr" style="left:651.12px;top:483.00px;transform:scaleX(1.0539);">Guest R/04639</span>
<span class="cd" style="left:650.93px;top:504.00px;transform:scaleX(1.0418);">20.06.2025 14:00:00</span>
<svg class="abs" style="left:790.10px;top:507.80px" width="15" height="10.4" viewBox="0 0 15 10.4" ><path d="M.3 3.500h9.200V.5l5.400 4.700-5.400 4.700V6.900H.3a.3.3 0 0 1-.3-.3V3.800a.3.3 0 0 1 .3-.3z" fill="#454b54"/></svg>
<span class="cd" style="left:812.63px;top:504.00px;transform:scaleX(1.0418);">21.06.2025 12:00:00</span>
<div class="pill" style="left:670.90px;top:532.00px;width:121.60px"></div><span class="tg" style="left:680.81px;top:531.00px;transform:scaleX(1.0601);">Breakfast Summer</span>
<div class="card" style="left:642px;top:571.4px;height:128.5px"></div>
<span class="ct" style="left:651.22px;top:583.00px;transform:scaleX(1.0938);">Alex Muller</span>
<svg class="abs" style="left:940.80px;top:583.80px" width="12.4" height="14.2" viewBox="0 0 448 512" ><path d="M224 256A128 128 0 1 0 224 0a128 128 0 1 0 0 256zm-45.700 48C79.800 304 0 383.800 0 482.300C0 498.700 13.300 512 29.700 512H418.300c16.400 0 29.700-13.300 29.700-29.700C448 383.800 368.200 304 269.700 304H178.300z" fill="#464c55"/></svg>
<span class="cr" style="left:651.12px;top:620.00px;transform:scaleX(1.0544);">Guest R/04152</span>
<span class="cd" style="left:651.09px;top:641.00px;transform:scaleX(1.0405);">01.05.2025 14:00:00</span>
<svg class="abs" style="left:790.10px;top:645.10px" width="15" height="10.4" viewBox="0 0 15 10.4" ><path d="M.3 3.500h9.200V.5l5.400 4.700-5.400 4.700V6.900H.3a.3.3 0 0 1-.3-.3V3.800a.3.3 0 0 1 .3-.3z" fill="#454b54"/></svg>
<span class="cd" style="left:812.79px;top:641.00px;transform:scaleX(1.0405);">03.05.2025 12:00:00</span>
<div class="pill" style="left:651.10px;top:668.40px;width:68.90px"></div><span class="tg" style="left:660.84px;top:668.00px;transform:scaleX(1.0772);">097-KR+</span>
<div class="pill" style="left:730.00px;top:668.40px;width:121.60px"></div><span class="tg" style="left:739.91px;top:668.00px;transform:scaleX(1.0601);">Breakfast Summer</span>
<span class="kh" style="left:994.50px;top:209.00px;transform:scaleX(1.0766);">Confirmed</span>
<svg class="abs" style="left:1301.00px;top:212.90px" width="12" height="12" viewBox="0 0 12 12" ><path d="M6 .3v11.400M.3 6h11.400" stroke="#66758a" stroke-width="1.150" fill="none"/></svg>
<div class="bar" style="left:994px;background:#74a899"></div>
<span class="cnt" style="left:1276.77px;top:236.00px;transform:scaleX(1.0583);">1,478</span>
<div class="card" style="left:994px;top:264.7px;height:129.3px"></div>
<span class="ct" style="left:1002.99px;top:277.00px;transform:scaleX(1.0556);">Carsley Edwards</span>
<svg class="abs" style="left:1292.80px;top:277.10px" width="12.4" height="14.2" viewBox="0 0 448 512" ><path d="M224 256A128 128 0 1 0 224 0a128 128 0 1 0 0 256zm-45.700 48C79.800 304 0 383.800 0 482.300C0 498.700 13.300 512 29.700 512H418.300c16.400 0 29.700-13.300 29.700-29.700C448 383.800 368.200 304 269.700 304H178.300z" fill="#464c55"/></svg>
<span class="cr" style="left:1003.12px;top:314.00px;transform:scaleX(1.0544);">Guest R/04732</span>
<span class="cd" style="left:1002.55px;top:335.00px;transform:scaleX(1.0447);">15.07.2025 14:00:00</span>
<svg class="abs" style="left:1142.10px;top:338.40px" width="15" height="10.4" viewBox="0 0 15 10.4" ><path d="M.3 3.500h9.200V.5l5.400 4.700-5.400 4.700V6.900H.3a.3.3 0 0 1-.3-.3V3.800a.3.3 0 0 1 .3-.3z" fill="#454b54"/></svg>
<span class="cd" style="left:1164.63px;top:335.00px;transform:scaleX(1.0418);">21.07.2025 12:00:00</span>
<div class="pill" style="left:1003.10px;top:361.70px;width:67.20px"></div><span class="tg" style="left:1012.86px;top:361.00px;transform:scaleX(1.0175);">375-EER</span>
<div class="pill" style="left:1074.50px;top:361.70px;width:67.50px"></div><span class="tg" style="left:1084.26px;top:361.00px;transform:scaleX(1.0239);">377-EER</span>
<div class="pill" style="left:1146.20px;top:361.70px;width:60.90px"></div><span class="tg" style="left:1155.48px;top:361.00px;transform:scaleX(1.0702);">155-ER</span>
<div class="card" style="left:994px;top:401.4px;height:128.8px"></div>
<span class="ct" style="left:1002.99px;top:413.00px;transform:scaleX(1.0566);">Christina Rossetti ()</span>
<svg class="abs" style="left:1292.80px;top:413.80px" width="12.4" height="14.2" viewBox="0 0 448 512" ><path d="M224 256A128 128 0 1 0 224 0a128 128 0 1 0 0 256zm-45.700 48C79.800 304 0 383.800 0 482.300C0 498.700 13.300 512 29.700 512H418.300c16.400 0 29.700-13.300 29.700-29.700C448 383.800 368.200 304 269.700 304H178.300z" fill="#464c55"/></svg>
<span class="cr" style="left:1003.12px;top:450.00px;transform:scaleX(1.0541);">Guest R/04731</span>
<span class="cd" style="left:1002.93px;top:471.00px;transform:scaleX(1.0418);">21.07.2025 14:00:00</span>
<svg class="abs" style="left:1142.10px;top:475.10px" width="15" height="10.4" viewBox="0 0 15 10.4" ><path d="M.3 3.500h9.200V.5l5.400 4.700-5.400 4.700V6.900H.3a.3.3 0 0 1-.3-.3V3.800a.3.3 0 0 1 .3-.3z" fill="#454b54"/></svg>
<span class="cd" style="left:1164.63px;top:471.00px;transform:scaleX(1.0418);">23.07.2025 12:00:00</span>
<div class="pill" style="left:1003.10px;top:498.40px;width:76.70px"></div><span class="tg" style="left:1012.85px;top:498.00px;transform:scaleX(1.0994);">370-DubR</span>
<div class="pill" style="left:1089.80px;top:498.40px;width:73.80px"></div><span class="tg" style="left:1099.73px;top:498.00px;transform:scaleX(1.0419);">Dinner FB</span>
<div class="card" style="left:994px;top:538.0px;height:128.5px"></div>
<span class="ct" style="left:1002.99px;top:550.00px;transform:scaleX(1.0566);">Christina Rossetti ()</span>
<svg class="abs" style="left:1292.80px;top:550.40px" width="12.4" height="14.2" viewBox="0 0 448 512" ><path d="M224 256A128 128 0 1 0 224 0a128 128 0 1 0 0 256zm-45.700 48C79.800 304 0 383.800 0 482.300C0 498.700 13.300 512 29.700 512H418.300c16.400 0 29.700-13.300 29.700-29.700C448 383.800 368.200 304 269.700 304H178.300z" fill="#464c55"/></svg>
<span class="cr" style="left:1003.12px;top:587.00px;transform:scaleX(1.0526);">Guest R/04730</span>
<span class="cd" style="left:1002.93px;top:608.00px;transform:scaleX(1.0418);">21.07.2025 14:00:00</span>
<svg class="abs" style="left:1142.10px;top:611.70px" width="15" height="10.4" viewBox="0 0 15 10.4" ><path d="M.3 3.500h9.200V.5l5.400 4.700-5.400 4.700V6.900H.3a.3.3 0 0 1-.3-.3V3.800a.3.3 0 0 1 .3-.3z" fill="#454b54"/></svg>
<span class="cd" style="left:1164.63px;top:608.00px;transform:scaleX(1.0418);">23.07.2025 12:00:00</span>
<div class="pill" style="left:1003.10px;top:635.00px;width:76.70px"></div><span class="tg" style="left:1012.85px;top:634.00px;transform:scaleX(1.0994);">369-DubR</span>
<div class="pill" style="left:1089.80px;top:635.00px;width:73.80px"></div><span class="tg" style="left:1099.73px;top:634.00px;transform:scaleX(1.0419);">Dinner FB</span>
<div class="card" style="left:994px;top:674.0px;height:129.6px"></div>
<span class="ct" style="left:1002.99px;top:686.00px;transform:scaleX(1.0566);">Christina Rossetti ()</span>
<svg class="abs" style="left:1292.80px;top:686.40px" width="12.4" height="14.2" viewBox="0 0 448 512" ><path d="M224 256A128 128 0 1 0 224 0a128 128 0 1 0 0 256zm-45.700 48C79.800 304 0 383.800 0 482.300C0 498.700 13.300 512 29.700 512H418.300c16.400 0 29.700-13.300 29.700-29.700C448 383.800 368.200 304 269.700 304H178.300z" fill="#464c55"/></svg>
<span class="cr" style="left:1003.12px;top:723.00px;transform:scaleX(1.0539);">Guest R/04729</span>
<span class="cd" style="left:1002.93px;top:744.00px;transform:scaleX(1.0418);">21.07.2025 14:00:00</span>
<svg class="abs" style="left:1142.10px;top:747.70px" width="15" height="10.4" viewBox="0 0 15 10.4" ><path d="M.3 3.500h9.200V.5l5.400 4.700-5.400 4.700V6.900H.3a.3.3 0 0 1-.3-.3V3.800a.3.3 0 0 1 .3-.3z" fill="#454b54"/></svg>
<span class="cd" style="left:1164.63px;top:744.00px;transform:scaleX(1.0418);">23.07.2025 12:00:00</span>
<div class="pill" style="left:1003.10px;top:771.00px;width:76.70px"></div><span class="tg" style="left:1012.85px;top:770.00px;transform:scaleX(1.0994);">368-DubR</span>
<div class="pill" style="left:1089.80px;top:771.00px;width:73.80px"></div><span class="tg" style="left:1099.73px;top:770.00px;transform:scaleX(1.0419);">Dinner FB</span>
<div class="card" style="left:994px;top:811.4px;height:128.8px"></div>
<span class="ct" style="left:1003.37px;top:823.00px;transform:scaleX(1.0737);">Jacqueline Franklin (Jack11)</span>
<svg class="abs" style="left:1292.80px;top:823.80px" width="12.4" height="14.2" viewBox="0 0 448 512" ><path d="M224 256A128 128 0 1 0 224 0a128 128 0 1 0 0 256zm-45.700 48C79.800 304 0 383.800 0 482.300C0 498.700 13.300 512 29.700 512H418.300c16.400 0 29.700-13.300 29.700-29.700C448 383.800 368.200 304 269.700 304H178.300z" fill="#464c55"/></svg>
<span class="cr" style="left:1003.12px;top:860.00px;transform:scaleX(1.0526);">Guest R/04710</span>
<span class="cd" style="left:1003.09px;top:881.00px;transform:scaleX(1.0405);">09.07.2025 14:00:00</span>
<svg class="abs" style="left:1142.10px;top:885.10px" width="15" height="10.4" viewBox="0 0 15 10.4" ><path d="M.3 3.500h9.200V.5l5.400 4.700-5.400 4.700V6.900H.3a.3.3 0 0 1-.3-.3V3.800a.3.3 0 0 1 .3-.3z" fill="#454b54"/></svg>
<span class="cd" style="left:1164.25px;top:881.00px;transform:scaleX(1.0447);">10.07.2025 12:00:00</span>
<div class="pill" style="left:1003.10px;top:908.40px;width:76.70px"></div><span class="tg" style="left:1012.85px;top:908.00px;transform:scaleX(1.0994);">367-DubR</span>
<span class="kh" style="left:1346.48px;top:209.00px;transform:scaleX(1.1010);">Checked-In</span>
<div class="bar" style="left:1346px;background:#1463c8"></div>
<span class="cnt" style="left:1641.10px;top:236.00px;transform:scaleX(1.0274);">241</span>
<div class="card" style="left:1346px;top:264.7px;height:111.0px"></div>
<span class="ct" style="left:1355.23px;top:277.00px;transform:scaleX(1.0669);">Alex Bergamo</span>
<svg class="abs" style="left:1644.80px;top:277.10px" width="12.4" height="14.2" viewBox="0 0 448 512" ><path d="M224 256A128 128 0 1 0 224 0a128 128 0 1 0 0 256zm-45.700 48C79.800 304 0 383.800 0 482.300C0 498.700 13.300 512 29.700 512H418.300c16.400 0 29.700-13.300 29.700-29.700C448 383.800 368.200 304 269.700 304H178.300z" fill="#464c55"/></svg>
<span class="cr" style="left:1355.12px;top:314.00px;transform:scaleX(1.0530);">Guest R/04665</span>
<span class="cd" style="left:1355.09px;top:335.00px;transform:scaleX(1.0405);">07.07.2025 14:00:00</span>
<svg class="abs" style="left:1494.10px;top:338.40px" width="15" height="10.4" viewBox="0 0 15 10.4" ><path d="M.3 3.500h9.200V.5l5.400 4.700-5.400 4.700V6.900H.3a.3.3 0 0 1-.3-.3V3.800a.3.3 0 0 1 .3-.3z" fill="#454b54"/></svg>
<span class="cd" style="left:1516.79px;top:335.00px;transform:scaleX(1.0405);">08.07.2025 12:00:00</span>
<div class="card" style="left:1346px;top:383.3px;height:129.6px"></div>
<span class="ct" style="left:1354.60px;top:395.00px;transform:scaleX(1.0728);">Miss Maeva Koller</span>
<svg class="abs" style="left:1644.80px;top:395.70px" width="12.4" height="14.2" viewBox="0 0 448 512" ><path d="M224 256A128 128 0 1 0 224 0a128 128 0 1 0 0 256zm-45.700 48C79.800 304 0 383.800 0 482.300C0 498.700 13.300 512 29.700 512H418.300c16.400 0 29.700-13.300 29.700-29.700C448 383.800 368.200 304 269.700 304H178.300z" fill="#464c55"/></svg>
<span class="cr" style="left:1355.12px;top:432.00px;transform:scaleX(1.0544);">Guest R/04657</span>
<span class="cd" style="left:1355.09px;top:453.00px;transform:scaleX(1.0405);">07.07.2025 14:00:00</span>
<svg class="abs" style="left:1494.10px;top:457.00px" width="15" height="10.4" viewBox="0 0 15 10.4" ><path d="M.3 3.500h9.200V.5l5.400 4.700-5.400 4.700V6.900H.3a.3.3 0 0 1-.3-.3V3.800a.3.3 0 0 1 .3-.3z" fill="#454b54"/></svg>
<span class="cd" style="left:1516.79px;top:453.00px;transform:scaleX(1.0405);">09.07.2025 12:00:00</span>
<div class="pill" style="left:1374.90px;top:481.20px;width:89.20px"></div><span class="tg" style="left:1384.83px;top:481.00px;transform:scaleX(1.0414);">Breakfast FB</span>
<div class="pill" style="left:1468.30px;top:481.20px;width:82.00px"></div><span class="tg" style="left:1478.16px;top:481.00px;transform:scaleX(1.1267);">Half-Board</span>
<div class="card" style="left:1346px;top:520.4px;height:128.5px"></div>
<span class="ct" style="left:1354.60px;top:532.00px;transform:scaleX(1.0728);">Miss Maeva Koller</span>
<svg class="abs" style="left:1644.80px;top:532.80px" width="12.4" height="14.2" viewBox="0 0 448 512" ><path d="M224 256A128 128 0 1 0 224 0a128 128 0 1 0 0 256zm-45.700 48C79.800 304 0 383.800 0 482.300C0 498.700 13.300 512 29.700 512H418.300c16.400 0 29.700-13.300 29.700-29.700C448 383.800 368.200 304 269.700 304H178.300z" fill="#464c55"/></svg>
<span class="cr" style="left:1355.12px;top:569.00px;transform:scaleX(1.0526);">Guest R/04670</span>
<span class="cd" style="left:1355.09px;top:590.00px;transform:scaleX(1.0405);">06.07.2025 14:00:00</span>
<svg class="abs" style="left:1494.10px;top:594.10px" width="15" height="10.4" viewBox="0 0 15 10.4" ><path d="M.3 3.500h9.200V.5l5.400 4.700-5.400 4.700V6.900H.3a.3.3 0 0 1-.3-.3V3.800a.3.3 0 0 1 .3-.3z" fill="#454b54"/></svg>
<span class="cd" style="left:1516.79px;top:590.00px;transform:scaleX(1.0405);">07.07.2025 12:00:00</span>
<div class="pill" style="left:1355.10px;top:617.40px;width:66.80px"></div><span class="tg" style="left:1365.04px;top:617.00px;transform:scaleX(1.0643);">458-ExR</span>
<div class="card" style="left:1346px;top:656.2px;height:129.6px"></div>
<span class="ct" style="left:1354.60px;top:668.00px;transform:scaleX(1.0728);">Miss Maeva Koller</span>
<svg class="abs" style="left:1644.80px;top:668.60px" width="12.4" height="14.2" viewBox="0 0 448 512" ><path d="M224 256A128 128 0 1 0 224 0a128 128 0 1 0 0 256zm-45.700 48C79.800 304 0 383.800 0 482.300C0 498.700 13.300 512 29.700 512H418.300c16.400 0 29.700-13.300 29.700-29.700C448 383.800 368.200 304 269.700 304H178.300z" fill="#464c55"/></svg>
<span class="cr" style="left:1355.12px;top:705.00px;transform:scaleX(1.0533);">Guest R/04658</span>
<span class="cd" style="left:1355.09px;top:726.00px;transform:scaleX(1.0405);">07.07.2025 14:00:00</span>
<svg class="abs" style="left:1494.10px;top:729.90px" width="15" height="10.4" viewBox="0 0 15 10.4" ><path d="M.3 3.500h9.200V.5l5.400 4.700-5.400 4.700V6.900H.3a.3.3 0 0 1-.3-.3V3.800a.3.3 0 0 1 .3-.3z" fill="#454b54"/></svg>
<span class="cd" style="left:1516.25px;top:726.00px;transform:scaleX(1.0533);">11.07.2025 12:00:00</span>
<div class="pill" style="left:1374.90px;top:754.10px;width:89.20px"></div><span class="tg" style="left:1384.83px;top:753.00px;transform:scaleX(1.0414);">Breakfast FB</span>
<div class="pill" style="left:1468.30px;top:754.10px;width:34.00px"></div><span class="tg" style="left:1478.09px;top:753.00px;transform:scaleX(1.1352);">b3</span>
<div class="card" style="left:1346px;top:793.0px;height:110.7px"></div>
<span class="ct" style="left:1355.18px;top:805.00px;transform:scaleX(1.0476);">Sonny Hayes</span>
<svg class="abs" style="left:1644.80px;top:805.40px" width="12.4" height="14.2" viewBox="0 0 448 512" ><path d="M224 256A128 128 0 1 0 224 0a128 128 0 1 0 0 256zm-45.700 48C79.800 304 0 383.800 0 482.300C0 498.700 13.300 512 29.700 512H418.300c16.400 0 29.700-13.300 29.700-29.700C448 383.800 368.200 304 269.700 304H178.300z" fill="#464c55"/></svg>
<span class="cr" style="left:1355.12px;top:842.00px;transform:scaleX(1.0530);">Guest R/04645</span>
<span class="cd" style="left:1355.09px;top:863.00px;transform:scaleX(1.0405);">02.07.2025 14:00:00</span>
<svg class="abs" style="left:1494.10px;top:866.70px" width="15" height="10.4" viewBox="0 0 15 10.4" ><path d="M.3 3.500h9.200V.5l5.400 4.700-5.400 4.700V6.900H.3a.3.3 0 0 1-.3-.3V3.800a.3.3 0 0 1 .3-.3z" fill="#454b54"/></svg>
<span class="cd" style="left:1516.79px;top:863.00px;transform:scaleX(1.0405);">06.07.2025 12:00:00</span>
<div class="card" style="left:1346px;top:910.8px;height:111.0px"></div>
<span class="ct" style="left:1355.18px;top:923.00px;transform:scaleX(1.0476);">Sonny Hayes</span>
<svg class="abs" style="left:1644.80px;top:923.20px" width="12.4" height="14.2" viewBox="0 0 448 512" ><path d="M224 256A128 128 0 1 0 224 0a128 128 0 1 0 0 256zm-45.700 48C79.800 304 0 383.800 0 482.300C0 498.700 13.300 512 29.700 512H418.300c16.400 0 29.700-13.300 29.700-29.700C448 383.800 368.200 304 269.700 304H178.300z" fill="#464c55"/></svg>
<span class="cr" style="left:1355.12px;top:960.00px;transform:scaleX(1.0510);">Guest R/04644</span>
<span class="cd" style="left:1355.09px;top:981.00px;transform:scaleX(1.0405);">02.07.2025 14:00:00</span>
<svg class="abs" style="left:1494.10px;top:984.50px" width="15" height="10.4" viewBox="0 0 15 10.4" ><path d="M.3 3.500h9.200V.5l5.400 4.700-5.400 4.700V6.900H.3a.3.3 0 0 1-.3-.3V3.800a.3.3 0 0 1 .3-.3z" fill="#454b54"/></svg>
<span class="cd" style="left:1516.79px;top:981.00px;transform:scaleX(1.0405);">06.07.2025 12:00:00</span>
<span class="kh" style="left:1698.49px;top:209.00px;transform:scaleX(1.0865);">Checked-Out</span>
<div class="bar" style="left:1698px;background:#1f2226"></div>
<div class="card" style="left:1698px;top:264.7px;height:128.2px"></div>
<span class="ct" style="left:1706.60px;top:277.00px;transform:scaleX(1.0728);">Miss Maeva Koller</span>
<svg class="abs" style="left:1996.80px;top:277.10px" width="12.4" height="14.2" viewBox="0 0 448 512" ><path d="M224 256A128 128 0 1 0 224 0a128 128 0 1 0 0 256zm-45.700 48C79.800 304 0 383.800 0 482.300C0 498.700 13.300 512 29.700 512H418.300c16.400 0 29.700-13.300 29.700-29.700C448 383.800 368.200 304 269.700 304H178.300z" fill="#464c55"/></svg>
<span class="cr" style="left:1707.12px;top:314.00px;transform:scaleX(1.0541);">Guest R/04671</span>
<span class="cd" style="left:1707.09px;top:335.00px;transform:scaleX(1.0405);">06.07.2025 14:00:00</span>
<svg class="abs" style="left:1846.10px;top:338.40px" width="15" height="10.4" viewBox="0 0 15 10.4" ><path d="M.3 3.500h9.200V.5l5.400 4.700-5.400 4.700V6.900H.3a.3.3 0 0 1-.3-.3V3.800a.3.3 0 0 1 .3-.3z" fill="#454b54"/></svg>
<span class="cd" style="left:1868.79px;top:335.00px;transform:scaleX(1.0405);">07.07.2025 12:00:00</span>
<div class="pill" style="left:1707.10px;top:361.70px;width:66.80px"></div><span class="tg" style="left:1717.04px;top:361.00px;transform:scaleX(1.0643);">459-ExR</span>
</div></div>
<div id="hs"></div><div id="vsb"></div>
<svg class="abs" style="left:1080px;top:395px" width="50" height="55" viewBox="0 0 50 55"><path d="M17.300 33.200V7.100a3 3 0 0 1 6 0V17c0-3.300 6-3.300 6 .2 0-2.700 6-2.500 6 .8 0-2.400 5.800-2.200 5.800 1.200V35.500c0 8.500-5 14-13 14-5 0-8-2-11-6.500L8.300 32.800c-2-2.300.3-4.300 2.400-3.300z" fill="#fff" stroke="#0b0b0b" stroke-width="1.300" stroke-linejoin="round"/><path d="M23.300 16.500v9M29.300 17.500v7.500M35.300 18.500v6.500" stroke="#0b0b0b" stroke-width="1.300" fill="none"/></svg>
</body></html>
